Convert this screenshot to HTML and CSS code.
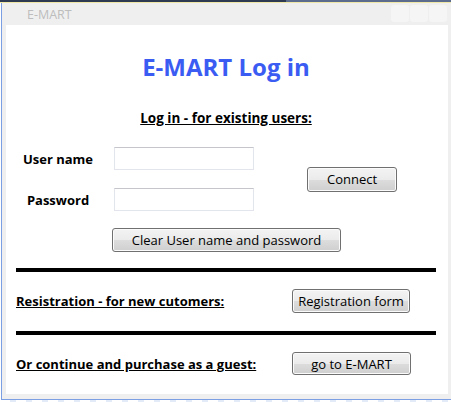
FILE: index.html
```html
<!DOCTYPE html>
<html>
<head>
<meta charset="utf-8">
<title>E-MART</title>
<link rel="stylesheet" href="styles.css">
</head>
<body>
<div class="topstrip"></div>
<div class="window">
  <div class="titlebar">
    <span class="title">E-MART</span>
    <div class="ctrls"><span></span><span></span><span></span></div>
  </div>
  <div class="client">
    <h1 class="heading">E-MART Log in</h1>
    <h2 class="subheading">Log in - for existing users:</h2>
    <div class="login">
      <label class="lbl">User name</label>
      <input class="field" type="text">
      <button class="btn connect">Connect</button>
      <label class="lbl">Password</label>
      <input class="field" type="password">
    </div>
    <button class="btn clear">Clear User name and password</button>
    <div class="rule"></div>
    <div class="row">
      <span class="link">Resistration - for new cutomers:</span>
      <button class="btn reg">Registration form</button>
    </div>
    <div class="rule rule2"></div>
    <div class="row">
      <span class="link">Or continue and purchase as a guest:</span>
      <button class="btn go">go to E-MART</button>
    </div>
  </div>
</div>
<div class="bottomstrip"></div>
</body>
</html>
```

FILE: styles.css
```css
html, body {
  margin: 0;
  padding: 0;
  background: #ffffff;
  width: 451px;
  height: 402px;
  overflow: hidden;
  font-family: "Open Sans", "Liberation Sans", sans-serif;
}

.topstrip {
  height: 3px;
  background:
    linear-gradient(#efe8a6, #efe8a6) left bottom / 100% 1px no-repeat,
    linear-gradient(to right, #2e3a52 286px, #5c6c8c 286px) left top / 100% 2px no-repeat;
}

.window {
  margin-left: 1px;
  height: 396px;
  border-left: 1px solid #7c9ee2;
  border-bottom: 1px solid #7c9ee2;
  background: #efefef;
  display: flex;
  flex-direction: column;
}

.titlebar {
  height: 22px;
  display: flex;
  align-items: flex-start;
  padding: 0 4px 0 25px;
}

.title {
  font-size: 12.5px;
  line-height: 24px;
  color: #bdbdbd;
}

.ctrls {
  margin-left: auto;
  margin-top: 2px;
  display: flex;
  gap: 1px;
}

.ctrls span {
  width: 18px;
  height: 17px;
  border-radius: 3px;
  background: #f5f5f5;
}

.client {
  margin-left: 4px;
  width: 442px;
  height: 369px;
  box-sizing: border-box;
  background: #ffffff;
  padding: 0 12px 0 10px;
}

.heading {
  margin: 26px 0 0;
  font-size: 24px;
  line-height: 32px;
  font-weight: 700;
  color: #3b5cf2;
  text-align: center;
}

.subheading {
  margin: 26px 0 0;
  font-size: 13.5px;
  line-height: 18px;
  font-weight: 700;
  text-decoration: underline;
  text-align: center;
  color: #000;
}

.login {
  margin-top: 20px;
  display: grid;
  grid-template-columns: 84px 140px auto;
  column-gap: 14px;
  row-gap: 18px;
  align-items: center;
}

.lbl {
  text-align: center;
  font-size: 13px;
  font-weight: 700;
  color: #000;
}

.field {
  width: 140px;
  height: 23px;
  box-sizing: border-box;
  margin: 0;
  padding: 0 3px;
  border: 1px solid #e2e5ec;
  border-top-color: #c4c6cc;
  background: #fff;
  outline: none;
}

.btn {
  box-sizing: border-box;
  margin: 0;
  padding: 0;
  font-family: "Open Sans", "Liberation Sans", sans-serif;
  font-size: 13px;
  color: #000;
  border: 1px solid #707070;
  border-radius: 3px;
  background: linear-gradient(#f3f3f3 0%, #ebebeb 50%, #dddddd 50%, #cfcfcf 100%);
  box-shadow: inset 0 0 0 1px #fbfbfb;
}

.connect {
  grid-column: 3;
  grid-row: 1 / 3;
  align-self: center;
  margin-left: 39px;
  width: 90px;
  height: 25px;
}

.clear {
  display: block;
  margin: 17px 0 0 96px;
  width: 229px;
  height: 24px;
}

.rule {
  margin-top: 16px;
  height: 4px;
  background: #000;
}

.rule2 {
  margin-top: 18px;
}

.row {
  margin-top: 17px;
  display: grid;
  grid-template-columns: 276px auto;
  align-items: center;
}

.link {
  font-size: 13px;
  font-weight: 700;
  text-decoration: underline;
  color: #000;
}

.reg {
  width: 118px;
  height: 24px;
}

.go {
  width: 119px;
  height: 23px;
}

.bottomstrip {
  height: 2px;
  background: repeating-linear-gradient(to right, #ffffff 0 10px, #e3eaf8 10px 16px);
}
```
